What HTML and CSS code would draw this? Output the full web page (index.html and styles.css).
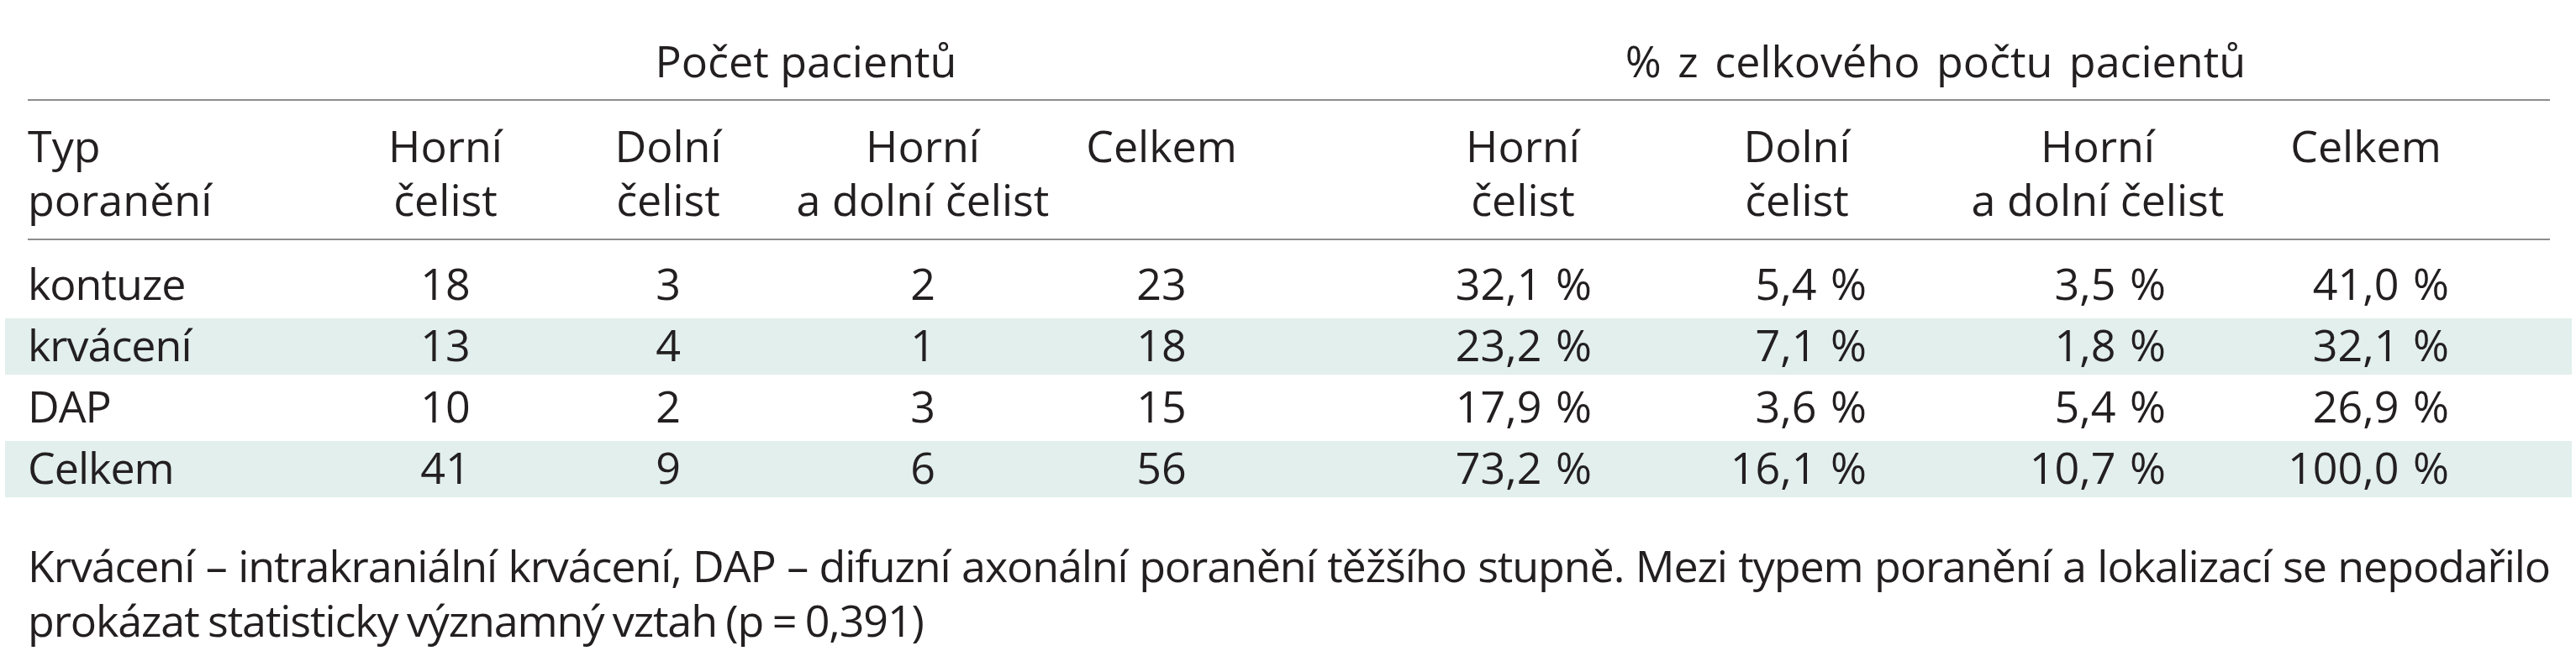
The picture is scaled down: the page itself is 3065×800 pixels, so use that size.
FILE: index.html
```html
<!DOCTYPE html>
<html lang="cs">
<head>
<meta charset="utf-8">
<title>Typ poranění a lokalizace</title>
<link rel="stylesheet" href="styles.css">
</head>
<body>
<div class="table">
  <div class="grid head-top">
    <div class="span-count">Počet pacientů</div>
    <div class="span-pct">% z celkového počtu pacientů</div>
  </div>
  <div class="grid head-cols">
    <div class="c1">Typ<br>poranění</div>
    <div class="cn">Horní<br>čelist</div>
    <div class="cn">Dolní<br>čelist</div>
    <div class="cn">Horní<br>a dolní čelist</div>
    <div class="cn">Celkem</div>
    <div class="cn c6">Horní<br>čelist</div>
    <div class="cn">Dolní<br>čelist</div>
    <div class="cn">Horní<br>a dolní čelist</div>
    <div class="cn">Celkem</div>
  </div>
  <div class="body">
    <div class="grid row">
      <div class="c1">kontuze</div>
      <div class="cn">18</div><div class="cn">3</div><div class="cn">2</div><div class="cn">23</div>
      <div class="pc p6">32,1&nbsp;%</div><div class="pc p7">5,4&nbsp;%</div><div class="pc p8">3,5&nbsp;%</div><div class="pc p9">41,0&nbsp;%</div>
    </div>
    <div class="grid row alt">
      <div class="c1">krvácení</div>
      <div class="cn">13</div><div class="cn">4</div><div class="cn">1</div><div class="cn">18</div>
      <div class="pc p6">23,2&nbsp;%</div><div class="pc p7">7,1&nbsp;%</div><div class="pc p8">1,8&nbsp;%</div><div class="pc p9">32,1&nbsp;%</div>
    </div>
    <div class="grid row">
      <div class="c1">DAP</div>
      <div class="cn">10</div><div class="cn">2</div><div class="cn">3</div><div class="cn">15</div>
      <div class="pc p6">17,9&nbsp;%</div><div class="pc p7">3,6&nbsp;%</div><div class="pc p8">5,4&nbsp;%</div><div class="pc p9">26,9&nbsp;%</div>
    </div>
    <div class="grid row alt">
      <div class="c1">Celkem</div>
      <div class="cn">41</div><div class="cn">9</div><div class="cn">6</div><div class="cn">56</div>
      <div class="pc p6">73,2&nbsp;%</div><div class="pc p7">16,1&nbsp;%</div><div class="pc p8">10,7&nbsp;%</div><div class="pc p9">100,0&nbsp;%</div>
    </div>
  </div>
</div>
<p class="note">Krvácení – intrakraniální krvácení, DAP – difuzní axonální poranění těžšího stupně. Mezi typem poranění a lokalizací se nepodařilo prokázat statisticky významný vztah (p = 0,391)</p>
</body>
</html>
```

FILE: styles.css
```css
html, body {
  margin: 0;
  padding: 0;
  background: #ffffff;
}

body {
  font-family: "Open Sans", "Noto Sans", sans-serif;
  font-size: 52px;
  color: #231f20;
}

.table {
  margin: 0 5px 0 6px;
}

.grid {
  display: grid;
  grid-template-columns: 367px 260px 270px 336px 232px 466px 348px 368px 270px 1fr;
}

.head-top,
.head-cols {
  margin: 0 26px 0 27px;
  border-bottom: 2px solid #8d8d8d;
  line-height: 64px;
}

.head-top {
  padding: 40px 0 14px;
}

.span-count {
  grid-column: 2 / 6;
  text-align: center;
  padding-left: 20px;
  white-space: nowrap;
}

.span-pct {
  grid-column: 6 / 10;
  text-align: center;
  padding-left: 158px;
  white-space: nowrap;
  word-spacing: 6px;
}

.head-cols {
  padding: 21px 0 15px;
}

.c1 {
  grid-column: 1;
  text-align: left;
  white-space: nowrap;
}

.row .c1 {
  letter-spacing: -1px;
}

.cn {
  text-align: center;
  white-space: nowrap;
}

.c6 {
  padding-left: 162px;
}

.body {
  padding-top: 20px;
  display: flex;
  flex-direction: column;
  gap: 6px;
}

.row {
  padding: 0 26px 5px 27px;
  line-height: 62px;
}

.row.alt {
  background: #e2efec;
}

.pc {
  text-align: right;
  white-space: nowrap;
  word-spacing: 3px;
}

.p6 { padding-right: 70px; }
.p7 { padding-right: 91px; }
.p8 { padding-right: 103px; }
.p9 { padding-right: 36px; }

.note {
  margin: 48px 31px 0 33px;
  line-height: 65px;
  text-align: justify;
  letter-spacing: -1.1px;
  word-spacing: -2px;
}
```
